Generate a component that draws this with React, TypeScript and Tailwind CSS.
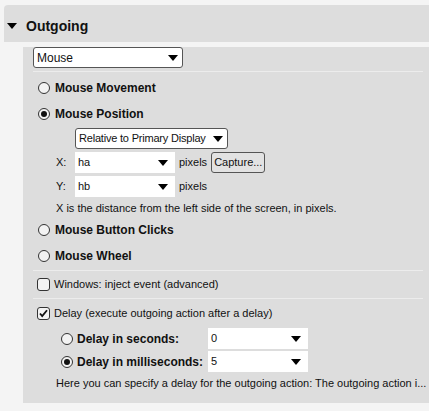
import React from 'react';

const Arrow = () => (
  <svg width="10" height="6" viewBox="0 0 10 6" className="shrink-0">
    <path d="M0 0h10L5 6z" fill="#000" />
  </svg>
);

const Radio = ({ checked }: { checked?: boolean }) => (
  <span className="w-[12px] h-[12px] shrink-0 rounded-full border border-[#333] bg-[#f3f3f3] flex items-center justify-center">
    {checked && <span className="w-[6px] h-[6px] rounded-full bg-[#111]" />}
  </span>
);

const Checkbox = ({ checked }: { checked?: boolean }) => (
  <span className="w-[13px] h-[13px] shrink-0 rounded-[3px] border border-[#333] bg-[#f3f3f3] flex items-center justify-center">
    {checked && (
      <svg width="9" height="9" viewBox="0 0 9 9">
        <path d="M1 4.5l2.2 2.6L8 1.2" stroke="#111" strokeWidth="1.8" fill="none" />
      </svg>
    )}
  </span>
);

const Select = ({ value, className }: { value: string; className: string }) => (
  <div className={`h-[21px] bg-white border border-[#555] rounded-[3px] flex items-center justify-between pl-[3px] pr-[4px] whitespace-nowrap ${className}`}>
    <span>{value}</span>
    <Arrow />
  </div>
);

const Combo = ({ value, className }: { value: string; className: string }) => (
  <div className={`h-[21px] bg-white flex items-center justify-between pl-[3px] pr-[7px] ${className}`}>
    <span>{value}</span>
    <Arrow />
  </div>
);

const RadioRow = ({ label, checked }: { label: string; checked?: boolean }) => (
  <div className="h-[26px] flex items-center gap-[5px] pl-[5px] font-bold text-[12px]">
    <Radio checked={checked} />
    <span>{label}</span>
  </div>
);

const Sep = () => <div className="h-px bg-[#ececec]" />;

export default function App() {
  return (
    <div className="w-[429px] h-[411px] bg-[#f4f4f4] pt-[5px] pl-[4px] text-[11px] text-[#111] font-['Liberation_Sans',Arial,sans-serif] overflow-hidden">
      <div className="h-[37px] bg-[#dddddd] rounded-tl-[4px] flex items-center pl-[3px] pt-[5px] gap-[9px]">
        <svg width="10" height="6" viewBox="0 0 10 6">
          <path d="M0 0h10L5 6z" fill="#000" />
        </svg>
        <span className="text-[14px] font-bold">Outgoing</span>
      </div>
      <div className="ml-[19px] h-[356px] bg-[#dddddd] pl-[10px] pr-[6px]">
        <Select value="Mouse" className="mt-[5px] w-[150px] text-[12px]" />
        <div className="mt-[3px]">
          <Sep />
        </div>
        <div className="mt-[3px]">
          <RadioRow label="Mouse Movement" />
          <RadioRow label="Mouse Position" checked />
        </div>
        <div className="pl-[23px]">
          <div className="pl-[19px] mt-[1px]">
            <Select value="Relative to Primary Display" className="w-[153px] tracking-[-0.2px]" />
          </div>
          <div className="mt-[3px] h-[21px] flex items-center">
            <span className="w-[19px]">X:</span>
            <Combo value="ha" className="w-[100px]" />
            <span className="ml-[4px]">pixels</span>
            <button className="ml-[4px] h-[21px] px-[2px] border border-[#555] rounded-[3px] bg-[#e2e2e2]">Capture...</button>
          </div>
          <div className="mt-[3px] h-[21px] flex items-center">
            <span className="w-[19px]">Y:</span>
            <Combo value="hb" className="w-[100px]" />
            <span className="ml-[4px]">pixels</span>
          </div>
          <div className="mt-[2px] h-[18px] flex items-center">X is the distance from the left side of the screen, in pixels.</div>
        </div>
        <RadioRow label="Mouse Button Clicks" />
        <RadioRow label="Mouse Wheel" />
        <div className="mt-[1px]">
          <Sep />
        </div>
        <div className="h-[27px] flex items-center gap-[4px] pl-[4px]">
          <Checkbox />
          <span>Windows: inject event (advanced)</span>
        </div>
        <Sep />
        <div className="h-[28px] flex items-center gap-[4px] pl-[4px]">
          <Checkbox checked />
          <span>Delay (execute outgoing action after a delay)</span>
        </div>
        <div className="pl-[28px]">
          <div className="mt-[1px] h-[21px] flex items-center font-bold text-[12px]">
            <Radio />
            <span className="ml-[4px] w-[131px]">Delay in seconds:</span>
            <Combo value="0" className="w-[100px] font-normal text-[11px]" />
          </div>
          <div className="mt-[2px] h-[21px] flex items-center font-bold text-[12px]">
            <Radio checked />
            <span className="ml-[4px] w-[131px]">Delay in milliseconds:</span>
            <Combo value="5" className="w-[100px] font-normal text-[11px]" />
          </div>
        </div>
        <div className="mt-[2px] h-[18px] pl-[23px] flex items-center whitespace-nowrap">
          Here you can specify a delay for the outgoing action: The outgoing action i...
        </div>
      </div>
    </div>
  );
}
